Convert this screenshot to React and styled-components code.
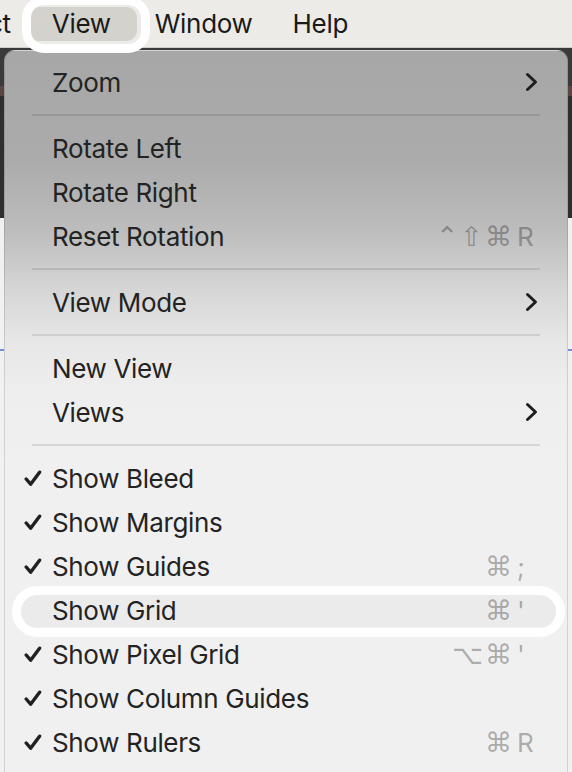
import React from 'react'
import styled, { createGlobalStyle } from 'styled-components'

const GlobalStyle = createGlobalStyle`
  html, body {
    margin: 0;
    padding: 0;
  }
  body {
    font-family: 'Inter', 'DejaVu Sans', sans-serif;
    -webkit-font-smoothing: antialiased;
  }
`

const items = [
  { label: 'Zoom', submenu: true },
  'sep',
  { label: 'Rotate Left' },
  { label: 'Rotate Right' },
  { label: 'Reset Rotation', mods: '⌃⇧⌘', key: 'R' },
  'sep',
  { label: 'View Mode', submenu: true },
  'sep',
  { label: 'New View' },
  { label: 'Views', submenu: true },
  'sep',
  { label: 'Show Bleed', checked: true },
  { label: 'Show Margins', checked: true },
  { label: 'Show Guides', checked: true, mods: '⌘', key: ';' },
  { label: 'Show Grid', mods: '⌘', key: "'", circled: true },
  { label: 'Show Pixel Grid', checked: true, mods: '⌥⌘', key: "'" },
  { label: 'Show Column Guides', checked: true },
  { label: 'Show Rulers', checked: true, mods: '⌘', key: 'R' },
]

function Check() {
  return (
    <svg width="18" height="17" viewBox="0 0 18 17">
      <path
        d="M2.2 9 L6.6 14.2 L15.6 2.2"
        fill="none"
        stroke="#202020"
        strokeWidth="3.4"
        strokeLinecap="round"
        strokeLinejoin="round"
      />
    </svg>
  )
}

function Chevron() {
  return (
    <svg width="13" height="20" viewBox="0 0 13 20">
      <path
        d="M2.5 2.5 L10.5 10 L2.5 17.5"
        fill="none"
        stroke="#1e1e1e"
        strokeWidth="3"
        strokeLinecap="round"
        strokeLinejoin="round"
      />
    </svg>
  )
}

export default function App() {
  return (
    <>
      <GlobalStyle />
      <Screen>
        <MenuBar>
          <MenuTitle $clipped>ct</MenuTitle>
          <MenuTitle $active>View</MenuTitle>
          <MenuTitle>Window</MenuTitle>
          <MenuTitle>Help</MenuTitle>
        </MenuBar>
        <Dropdown>
          {items.map((it, i) =>
            it === 'sep' ? (
              <Separator key={i} />
            ) : (
              <Row key={i} $circled={it.circled}>
                <CheckCell>{it.checked && <Check />}</CheckCell>
                <Label>{it.label}</Label>
                {it.submenu ? (
                  <ChevronCell>
                    <Chevron />
                  </ChevronCell>
                ) : it.key ? (
                  <Shortcut>
                    <Mods>{it.mods}</Mods>
                    <Key>{it.key}</Key>
                  </Shortcut>
                ) : (
                  <span />
                )}
              </Row>
            )
          )}
        </Dropdown>
        <Ring $left={22} $top={-4} $width={128} $height={57} $radius={22} />
        <Ring $left={12} $top={586} $width={553} $height={51} $radius={26} />
      </Screen>
    </>
  )
}

const Screen = styled.div`
  position: relative;
  width: 572px;
  height: 772px;
  overflow: hidden;
  background:
    linear-gradient(180deg,
      #ecebe7 0, #ecebe7 48px,
      #3a3a3a 48px, #3a3a3a 86px,
      #5a4640 86px, #5a4640 96px,
      #2f2f2f 96px, #2f2f2f 218px,
      #f1f1f1 218px, #f1f1f1 349px,
      #6f8fd8 349px, #6f8fd8 351px,
      #f1f1f1 351px);
`

const MenuBar = styled.div`
  display: flex;
  align-items: center;
  height: 47px;
  background: #ecebe7;
  border-bottom: 1px solid #cfcec9;
  font-size: 26px;
  color: #1a1a1a;
`

const MenuTitle = styled.div`
  display: flex;
  align-items: center;
  height: 34px;
  padding: 0 20px;
  border-radius: 11px;
  letter-spacing: -0.3px;
  ${(p) => p.$clipped && 'margin-left: -12px; padding: 0 17px 0 0;'}
  ${(p) => p.$active && 'background: #d3d2cd; padding: 0 26px 0 24px; margin-right: -2px;'}
`

const Dropdown = styled.div`
  margin: 2px 4px 0 4px;
  padding-top: 9px;
  height: 740px;
  box-sizing: border-box;
  border: 1px solid rgba(0, 0, 0, 0.12);
  border-bottom: none;
  border-radius: 11px 11px 0 0;
  background: linear-gradient(180deg,
    #a7a7a7 0px,
    #ababab 110px,
    #bdbdbd 180px,
    #d6d6d6 240px,
    #e7e7e7 290px,
    #eeeeee 340px,
    #f0f0f0 420px);
`

const Row = styled.div`
  position: relative;
  display: grid;
  grid-template-columns: 28px 1fr auto;
  align-items: center;
  height: 44px;
  padding: 0 27px 0 19px;
  font-size: 26px;
  color: #232323;
  ${(p) =>
    p.$circled &&
    `
    &::before {
      content: '';
      position: absolute;
      left: 13px;
      right: 7px;
      top: 5px;
      bottom: 5px;
      border-radius: 17px;
      background: #ebebeb;
    }
  `}
  & > * {
    position: relative;
  }
`

const CheckCell = styled.div`
  display: flex;
  align-items: center;
  height: 100%;
`

const ChevronCell = styled.span`
  display: flex;
  margin-right: 2px;
`

const Label = styled.span`
  letter-spacing: -0.35px;
`

const Shortcut = styled.span`
  display: flex;
  align-items: center;
  color: rgba(0, 0, 0, 0.3);
  font-family: 'DejaVu Sans', sans-serif;
`

const Mods = styled.span`
  font-size: 27px;
  letter-spacing: 2px;
`

const Key = styled.span`
  width: 23px;
  margin-left: 3px;
  font-family: 'Inter', sans-serif;
  font-size: 26px;
`

const Separator = styled.div`
  height: 22px;
  margin: 0 27px 0 27px;
  display: flex;
  align-items: center;
  &::after {
    content: '';
    flex: 1;
    height: 2px;
    background: rgba(0, 0, 0, 0.1);
  }
`

const Ring = styled.div`
  position: absolute;
  left: ${(p) => p.$left}px;
  top: ${(p) => p.$top}px;
  width: ${(p) => p.$width}px;
  height: ${(p) => p.$height}px;
  box-sizing: border-box;
  border: 9px solid #ffffff;
  border-radius: ${(p) => p.$radius}px;
  pointer-events: none;
`
